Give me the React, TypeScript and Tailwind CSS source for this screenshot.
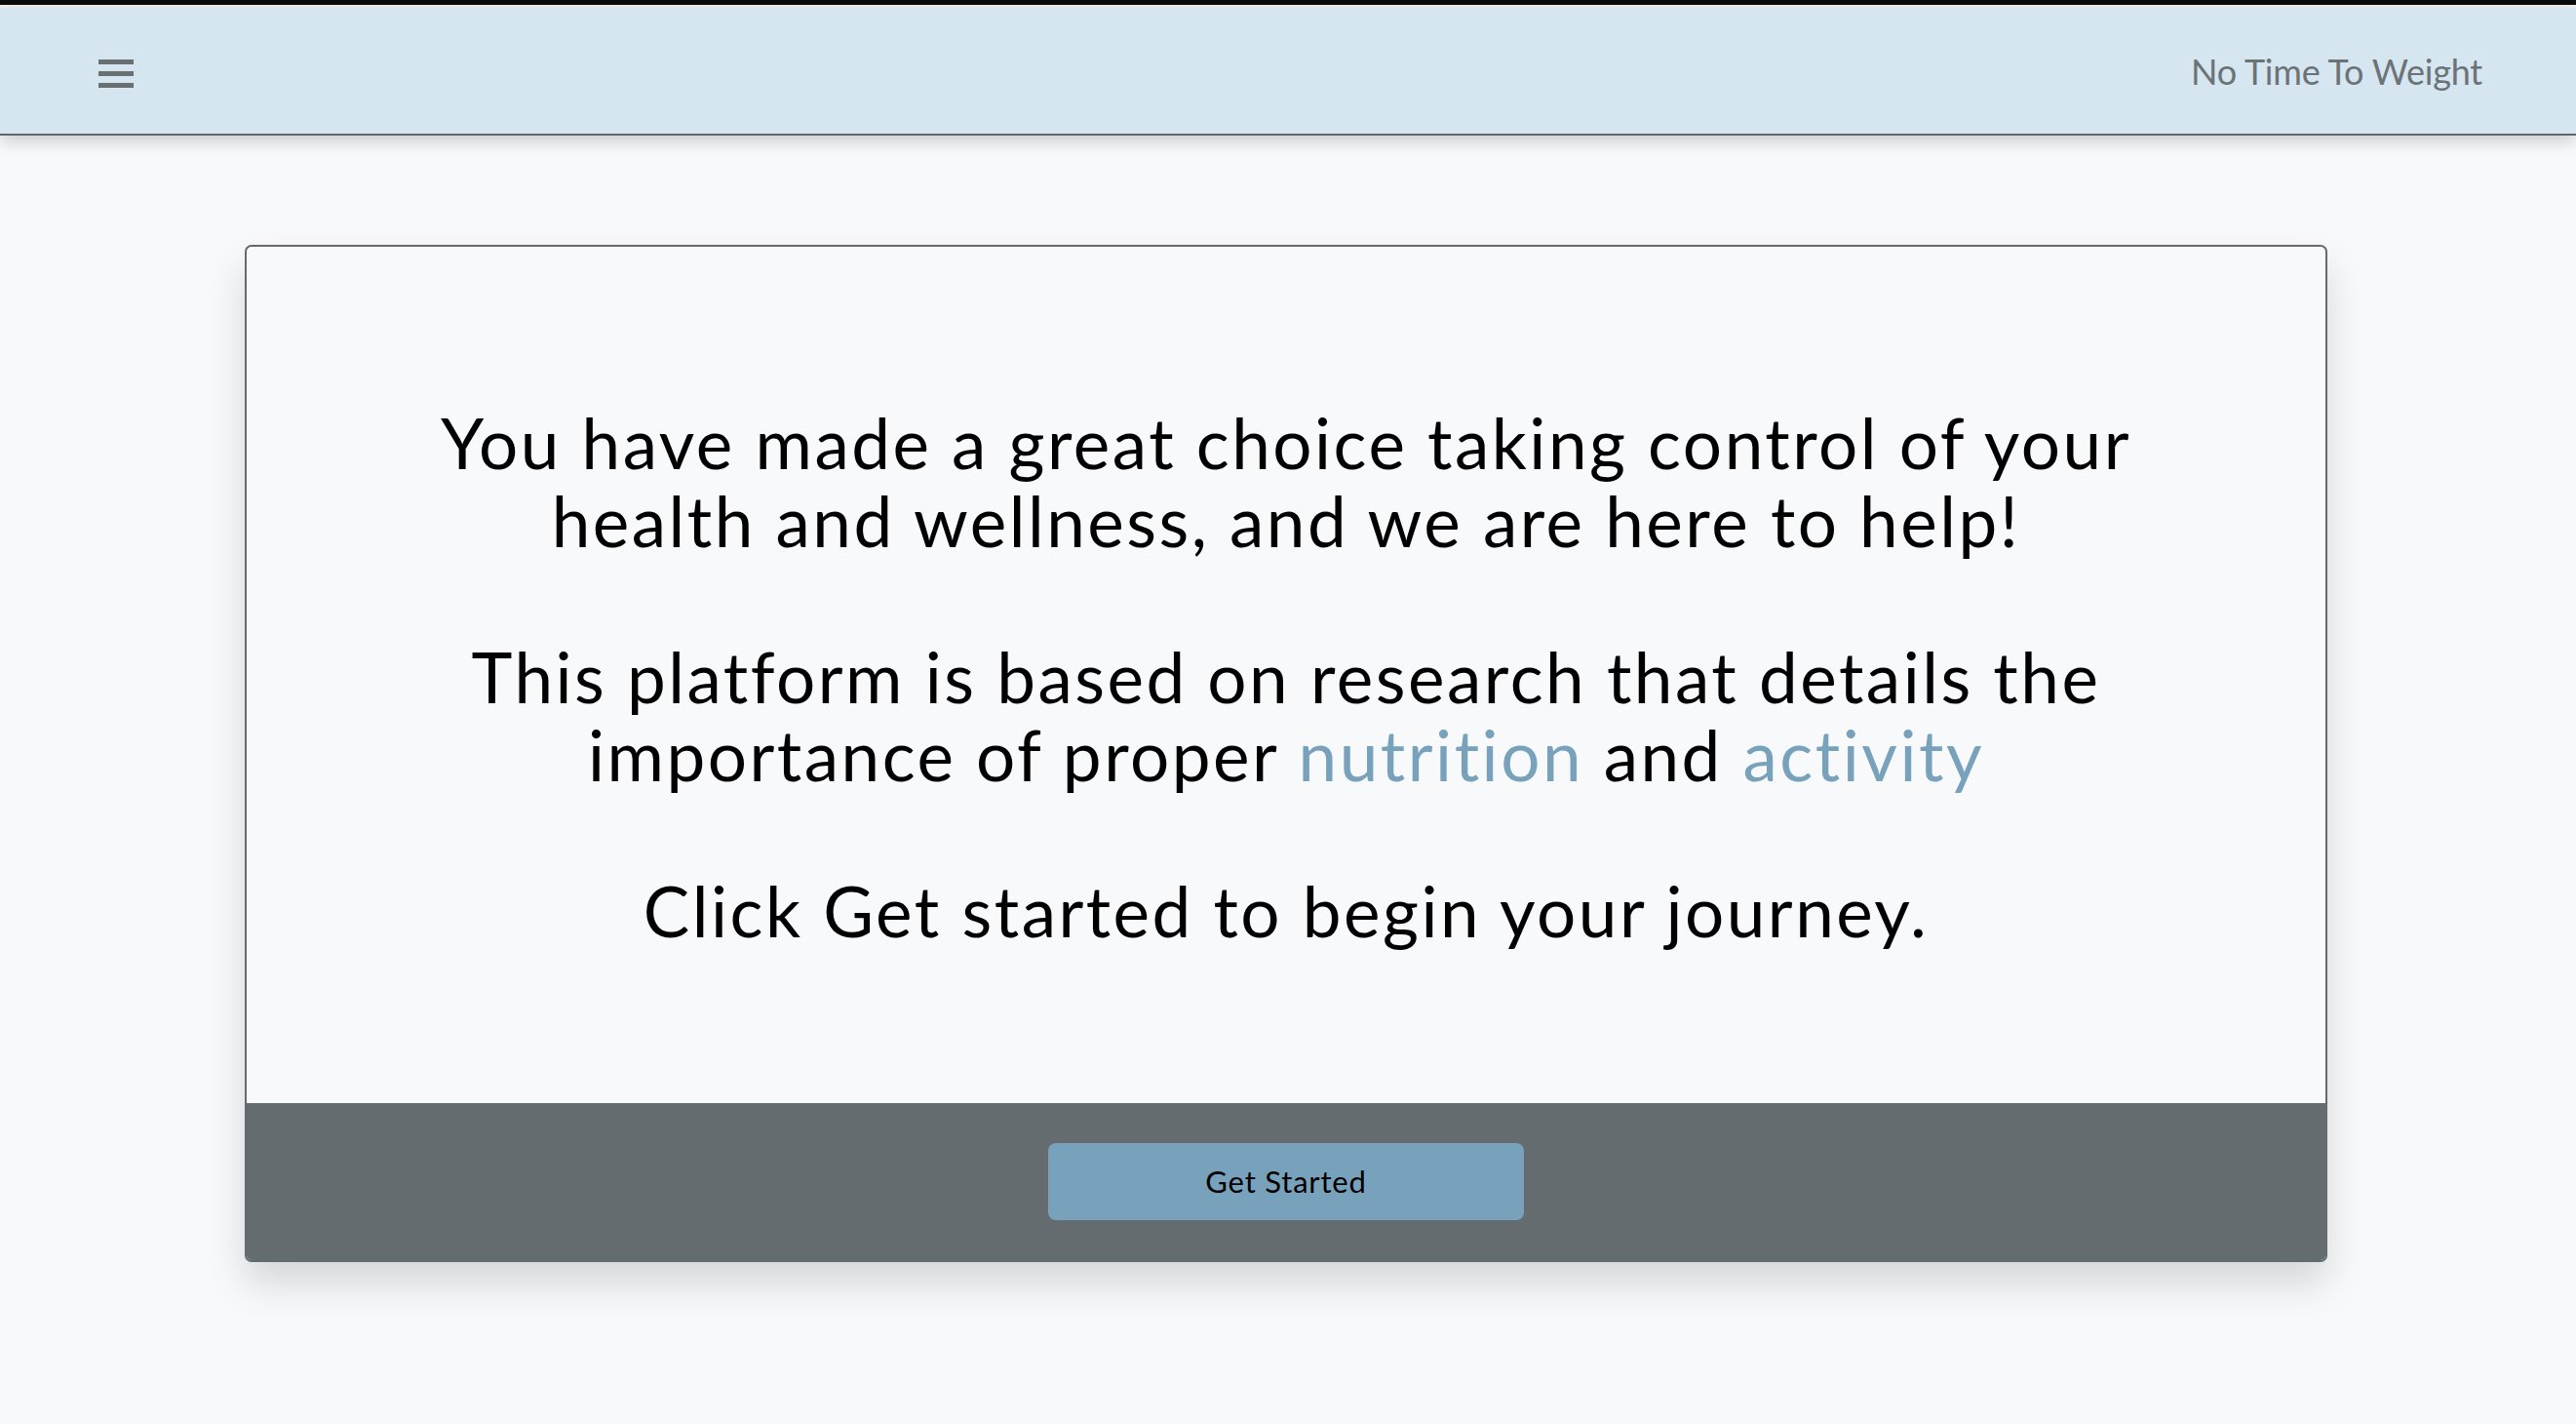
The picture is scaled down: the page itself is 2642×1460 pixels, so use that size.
import React from "react";

export default function App() {
  const font = { fontFamily: "Lato, 'Noto Sans', sans-serif" };
  return (
    <div className="min-h-[1460px] bg-[#f7f9fb] flex flex-col" style={font}>
      <div className="h-[5px] bg-[#0b0b0b]" />
      <div className="h-[3px] bg-[#eeeeee]" />
      <header className="relative z-10 h-[131px] bg-[#d6e6f0] border-b-2 border-[#5f676b] shadow-[0_6px_16px_rgba(0,0,0,0.18)] flex items-center justify-between pl-[101px] pr-[96px]">
        <div className="flex flex-col gap-[7px] w-[36px] mt-[6px]">
          <div className="h-[5px] bg-[#687074]" />
          <div className="h-[5px] bg-[#687074]" />
          <div className="h-[5px] bg-[#687074]" />
        </div>
        <div className="text-[36px] text-[#6b7377] tracking-[-0.2px]">No Time To Weight</div>
      </header>
      <main className="flex justify-start pl-[251px] pt-[112px]">
        <div className="w-[2136px] rounded-[7px] border-2 border-[#636b70] bg-[#f8f9fb] overflow-hidden shadow-[0_22px_40px_rgba(0,0,0,0.14)]">
          <div className="pt-[161px] pb-[157px] text-center text-black text-[71px] leading-[80px] tracking-[2.5px]">
            <p className="whitespace-nowrap">You have made a great choice taking control of your</p>
            <p className="whitespace-nowrap">health and wellness, and we are here to help!</p>
            <p className="h-[80px]" />
            <p className="whitespace-nowrap">This platform is based on research that details the</p>
            <p className="whitespace-nowrap">
              importance of proper <span className="text-[#78a2bb]">nutrition</span> and{" "}
              <span className="text-[#78a2bb]">activity</span>
            </p>
            <p className="h-[80px]" />
            <p className="whitespace-nowrap">Click Get started to begin your journey.</p>
          </div>
          <div className="bg-[#656c70] h-[161px] flex items-center justify-center">
            <button className="w-[488px] h-[79px] rounded-[8px] bg-[#78a2bb] text-black text-[31px] tracking-[0.8px]">
              Get Started
            </button>
          </div>
        </div>
      </main>
    </div>
  );
}
